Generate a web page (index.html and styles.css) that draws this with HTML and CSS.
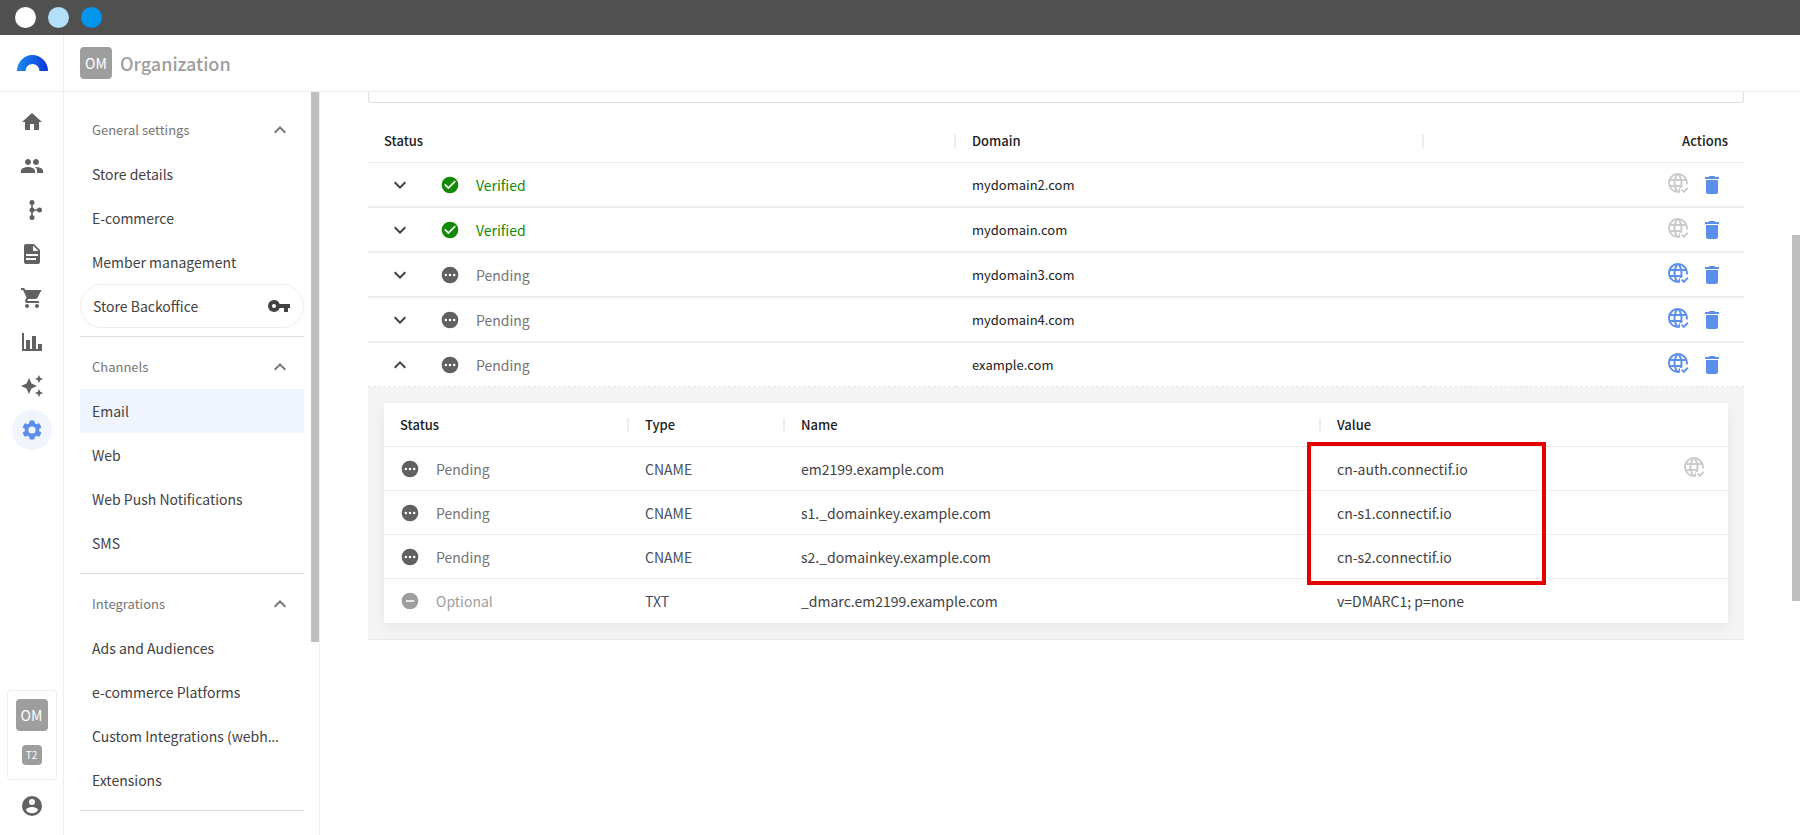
FILE: index.html
```html
<!DOCTYPE html>
<html lang="en">
  <head>
    <meta charset="UTF-8" />
    <meta name="viewport" content="width=device-width, initial-scale=1.0" />
    <title>Organization - Email domains</title>
    <link rel="stylesheet" href="styles.css">
  </head>
  <body>
    <!-- Shared icons -->
    <svg class="sprite" aria-hidden="true">
      <defs>
        <linearGradient id="logo-fill" x1="0" y1="0" x2="1" y2="0">
          <stop offset="0" stop-color="#1a8cf0" />
          <stop offset="1" stop-color="#0f35dc" />
        </linearGradient>
        <clipPath id="globe-cut"><path d="M0 0H24V13.5H16.5V17H14V24H0Z" /></clipPath>
      </defs>
      <symbol id="i-down" viewBox="0 0 24 24"><path d="M7.41 8.59 12 13.17l4.59-4.58L18 10l-6 6-6-6z" /></symbol>
      <symbol id="i-up" viewBox="0 0 24 24"><path d="M7.41 15.41 12 10.83l4.59 4.58L18 14l-6-6-6 6z" /></symbol>
      <symbol id="i-ok" viewBox="0 0 24 24"><path d="M12 2a10 10 0 1 0 0 20 10 10 0 0 0 0-20zm-2 15-5-5 1.41-1.41L10 14.17l7.59-7.59L19 8z" /></symbol>
      <symbol id="i-pending" viewBox="0 0 24 24"><path d="M12 2a10 10 0 1 0 0 20 10 10 0 0 0 0-20zM7 13.500a1.500 1.500 0 1 1 0-3 1.500 1.500 0 0 1 0 3zm5 0a1.500 1.500 0 1 1 0-3 1.500 1.500 0 0 1 0 3zm5 0a1.500 1.500 0 1 1 0-3 1.500 1.500 0 0 1 0 3z" /></symbol>
      <symbol id="i-optional" viewBox="0 0 24 24"><path d="M12 2a10 10 0 1 0 0 20 10 10 0 0 0 0-20zm5 11H7v-2h10z" /></symbol>
      <symbol id="i-trash" viewBox="0 0 24 24"><path d="M6 19c0 1.100.9 2 2 2h8c1.100 0 2-.9 2-2V7H6zM19 4h-3.500l-1-1h-5l-1 1H5v2h14z" /></symbol>
      <symbol id="i-globe" viewBox="0 0 24 24">
        <path clip-path="url(#globe-cut)" d="M16.360 14C16.440 13.340 16.500 12.680 16.500 12C16.500 11.320 16.440 10.660 16.360 10H19.740C19.900 10.640 20 11.310 20 12C20 12.690 19.900 13.360 19.740 14M14.590 19.560C15.190 18.450 15.650 17.250 15.970 16H18.920C17.960 17.650 16.430 18.930 14.590 19.560M14.340 14H9.660C9.560 13.340 9.500 12.680 9.500 12C9.500 11.320 9.560 10.650 9.660 10H14.340C14.430 10.650 14.500 11.320 14.500 12C14.500 12.680 14.430 13.340 14.340 14M12 19.960C11.170 18.760 10.500 17.430 10.090 16H13.910C13.500 17.430 12.830 18.760 12 19.960M8 8H5.080C6.030 6.340 7.570 5.060 9.400 4.440C8.800 5.550 8.350 6.750 8 8M5.080 16H8C8.350 17.250 8.800 18.450 9.400 19.560C7.570 18.930 6.030 17.650 5.080 16M4.260 14C4.100 13.360 4 12.690 4 12C4 11.310 4.100 10.640 4.260 10H7.640C7.560 10.660 7.500 11.320 7.500 12C7.500 12.680 7.560 13.340 7.640 14M12 4.030C12.830 5.230 13.500 6.570 13.910 8H10.090C10.500 6.570 11.170 5.230 12 4.030M18.920 8H15.970C15.650 6.750 15.190 5.550 14.590 4.440C16.430 5.070 17.960 6.340 18.920 8M12 2C6.470 2 2 6.500 2 12A10 10 0 0 0 12 22A10 10 0 0 0 22 12A10 10 0 0 0 12 2Z" />
        <path d="m17.750 22.160-2.750-3L16.160 18l1.590 1.590L21.340 16l1.160 1.410z" />
      </symbol>
    </svg>

    <div class="titlebar">
      <span class="dot dot-white"></span>
      <span class="dot dot-light"></span>
      <span class="dot dot-blue"></span>
    </div>

    <header class="header">
      <a class="logo" href="#" aria-label="Home">
        <svg width="31" height="16" viewBox="0 0 31 16"><path fill="url(#logo-fill)" d="M0 16A15.500 16 0 0 1 31 16H22.500A7 7 0 0 0 8.500 16Z" /></svg>
      </a>
      <span class="badge">OM</span>
      <h1>Organization</h1>
    </header>

    <div class="layout">
      <nav class="rail" aria-label="Main">
        <a href="#" aria-label="Dashboard"><svg viewBox="0 0 24 24"><path d="M10 20v-6h4v6h5v-8h3L12 3 2 12h3v8z" /></svg></a>
        <a href="#" aria-label="Contacts"><svg viewBox="0 0 24 24"><path d="M16 11c1.660 0 2.990-1.340 2.990-3S17.660 5 16 5s-3 1.340-3 3 1.340 3 3 3zm-8 0c1.660 0 2.990-1.340 2.990-3S9.660 5 8 5 5 6.340 5 8s1.340 3 3 3zm0 2c-2.330 0-7 1.170-7 3.500V19h14v-2.500C15 14.170 10.330 13 8 13zm8 0c-.29 0-.62.020-.97.050 1.160.840 1.970 1.970 1.970 3.450V19h6v-2.500c0-2.330-4.670-3.500-7-3.500z" /></svg></a>
        <a href="#" aria-label="Workflows"><svg viewBox="0 0 24 24"><path d="M12 4.500v15M12 12h7.500" fill="none" stroke="currentColor" stroke-width="1.600" /><circle cx="12" cy="4.500" r="2.500" /><circle cx="12" cy="12" r="2.500" /><circle cx="12" cy="19.500" r="2.500" /><circle cx="19.500" cy="12" r="2.500" /></svg></a>
        <a href="#" aria-label="Content"><svg viewBox="0 0 24 24"><path d="M14 2H6c-1.100 0-2 .9-2 2v16c0 1.100.9 2 2 2h12c1.100 0 2-.9 2-2V8zm2 16H6v-2h10zm2-4H6v-2h12zm-5-5V3.500L18.500 9z" /></svg></a>
        <a href="#" aria-label="Products"><svg viewBox="0 0 24 24"><path d="M7 18c-1.100 0-1.990.9-1.990 2S5.900 22 7 22s2-.9 2-2-.9-2-2-2zM17 18c-1.100 0-1.990.9-1.990 2s.89 2 1.990 2 2-.9 2-2-.9-2-2-2zM1 2v2h2l3.600 7.590-1.350 2.450C4.520 15.370 5.480 17 7 17h12v-2H7.420a.25.25 0 0 1-.22-.37l.9-1.630h7.450c.75 0 1.410-.41 1.750-1.030L21.500 4H5.210l-.94-2z" /></svg></a>
        <a href="#" aria-label="Reports"><svg viewBox="0 0 24 24"><path d="M22 21H2V3h2v16h2v-9h4v9h2V6h4v13h2v-5h4z" /></svg></a>
        <a href="#" aria-label="AI tools"><svg viewBox="0 0 24 24"><path d="m19 1-1.260 2.750L15 5l2.740 1.260L19 9l1.250-2.740L23 5l-2.750-1.250M9 4 6.500 9.500 1 12l5.500 2.500L9 20l2.500-5.500L17 12l-5.500-2.500M19 15l-1.260 2.740L15 19l2.740 1.250L19 23l1.250-2.750L23 19l-2.750-1.260" /></svg></a>
        <a href="#" class="active" aria-label="Settings"><svg viewBox="0 0 24 24"><path d="M19.140 12.940a7.100 7.100 0 0 0 0-1.880l2.030-1.580c.18-.14.23-.41.120-.61l-1.920-3.320a.49.49 0 0 0-.59-.22l-2.390.96a7 7 0 0 0-1.620-.94L14.410 2.810A.48.48 0 0 0 13.930 2.400h-3.840c-.24 0-.43.17-.47.41L9.260 5.350c-.59.24-1.130.57-1.620.94l-2.390-.96a.48.48 0 0 0-.59.22L2.740 8.870c-.12.210-.8.470.120.610l2.030 1.580a7 7 0 0 0 0 1.880l-2.030 1.580c-.18.140-.23.410-.12.610l1.920 3.320c.12.220.37.290.59.220l2.390-.96c.5.380 1.030.7 1.620.94l.36 2.540c.5.240.24.410.48.410h3.840c.24 0 .44-.17.470-.41l.36-2.540c.59-.24 1.130-.56 1.620-.94l2.390.96c.22.080.47 0 .59-.22l1.920-3.320a.48.48 0 0 0-.12-.61zM12 15.600a3.600 3.600 0 1 1 0-7.200 3.600 3.600 0 0 1 0 7.200z" /></svg></a>
        <div class="accounts">
          <span class="badge">OM</span>
          <span class="badge badge-small">T2</span>
        </div>
        <a href="#" aria-label="Profile"><svg viewBox="0 0 24 24"><path d="M12 2a10 10 0 1 0 0 20 10 10 0 0 0 0-20zm0 3a3 3 0 1 1 0 6 3 3 0 0 1 0-6zm0 14.200a7.200 7.200 0 0 1-6-3.220c.030-1.990 4-3.080 6-3.080s5.970 1.090 6 3.080a7.200 7.200 0 0 1-6 3.220z" /></svg></a>
      </nav>

      <div class="sidebar">
        <nav class="menu" aria-label="Settings">
          <section>
            <button class="group" type="button">General settings <svg class="icon"><use href="#i-up" /></svg></button>
            <a href="#">Store details</a>
            <a href="#">E-commerce</a>
            <a href="#">Member management</a>
            <a href="#" class="pill">Store Backoffice <svg class="icon" viewBox="0 0 24 24"><path d="M12.650 10A6 6 0 0 0 7 6a6 6 0 1 0 5.650 8H17v4h4v-4h2v-4zM7 14a2 2 0 1 1 0-4 2 2 0 0 1 0 4z" /></svg></a>
          </section>
          <section>
            <button class="group" type="button">Channels <svg class="icon"><use href="#i-up" /></svg></button>
            <a href="#" class="selected">Email</a>
            <a href="#">Web</a>
            <a href="#">Web Push Notifications</a>
            <a href="#">SMS</a>
          </section>
          <section>
            <button class="group" type="button">Integrations <svg class="icon"><use href="#i-up" /></svg></button>
            <a href="#">Ads and Audiences</a>
            <a href="#">e-commerce Platforms</a>
            <a href="#"><span>Custom Integrations (webh<span class="dots">…</span></span></a>
            <a href="#">Extensions</a>
          </section>
        </nav>
        <div class="scroll"><div class="thumb menu-thumb"></div></div>
      </div>

      <main class="main">
        <div class="content">
          <div class="panel-end"></div>
          <table class="domains">
            <colgroup><col class="d-status" /><col class="d-domain" /><col /></colgroup>
            <thead>
              <tr><th>Status</th><th>Domain</th><th class="right">Actions</th></tr>
            </thead>
            <tbody>
              <tr>
                <td><div class="status verified"><button type="button" aria-label="Expand"><svg class="icon"><use href="#i-down" /></svg></button><svg class="mark"><use href="#i-ok" /></svg>Verified</div></td>
                <td>mydomain2.com</td>
                <td><div class="actions"><button class="verify" type="button" aria-label="Verify" disabled><svg class="icon"><use href="#i-globe" /></svg></button><button type="button" aria-label="Delete"><svg class="icon"><use href="#i-trash" /></svg></button></div></td>
              </tr>
              <tr>
                <td><div class="status verified"><button type="button" aria-label="Expand"><svg class="icon"><use href="#i-down" /></svg></button><svg class="mark"><use href="#i-ok" /></svg>Verified</div></td>
                <td>mydomain.com</td>
                <td><div class="actions"><button class="verify" type="button" aria-label="Verify" disabled><svg class="icon"><use href="#i-globe" /></svg></button><button type="button" aria-label="Delete"><svg class="icon"><use href="#i-trash" /></svg></button></div></td>
              </tr>
              <tr>
                <td><div class="status"><button type="button" aria-label="Expand"><svg class="icon"><use href="#i-down" /></svg></button><svg class="mark"><use href="#i-pending" /></svg>Pending</div></td>
                <td>mydomain3.com</td>
                <td><div class="actions"><button class="verify" type="button" aria-label="Verify"><svg class="icon"><use href="#i-globe" /></svg></button><button type="button" aria-label="Delete"><svg class="icon"><use href="#i-trash" /></svg></button></div></td>
              </tr>
              <tr>
                <td><div class="status"><button type="button" aria-label="Expand"><svg class="icon"><use href="#i-down" /></svg></button><svg class="mark"><use href="#i-pending" /></svg>Pending</div></td>
                <td>mydomain4.com</td>
                <td><div class="actions"><button class="verify" type="button" aria-label="Verify"><svg class="icon"><use href="#i-globe" /></svg></button><button type="button" aria-label="Delete"><svg class="icon"><use href="#i-trash" /></svg></button></div></td>
              </tr>
              <tr class="open">
                <td><div class="status"><button type="button" aria-label="Collapse"><svg class="icon"><use href="#i-up" /></svg></button><svg class="mark"><use href="#i-pending" /></svg>Pending</div></td>
                <td>example.com</td>
                <td><div class="actions"><button class="verify" type="button" aria-label="Verify"><svg class="icon"><use href="#i-globe" /></svg></button><button type="button" aria-label="Delete"><svg class="icon"><use href="#i-trash" /></svg></button></div></td>
              </tr>
            </tbody>
          </table>

          <div class="details">
            <table class="records">
              <colgroup><col class="r-status" /><col class="r-type" /><col class="r-name" /><col /><col class="r-action" /></colgroup>
              <thead>
                <tr><th>Status</th><th>Type</th><th>Name</th><th colspan="2">Value</th></tr>
              </thead>
              <tbody>
                <tr>
                  <td><div class="status"><svg class="mark"><use href="#i-pending" /></svg>Pending</div></td>
                  <td class="type">CNAME</td>
                  <td>em2199.example.com</td>
                  <td class="value">cn-auth.connectif.io<span class="highlight"></span></td>
                  <td><div class="actions"><button class="verify" type="button" aria-label="Verify" disabled><svg class="icon"><use href="#i-globe" /></svg></button></div></td>
                </tr>
                <tr>
                  <td><div class="status"><svg class="mark"><use href="#i-pending" /></svg>Pending</div></td>
                  <td class="type">CNAME</td>
                  <td>s1._domainkey.example.com</td>
                  <td>cn-s1.connectif.io</td>
                  <td></td>
                </tr>
                <tr>
                  <td><div class="status"><svg class="mark"><use href="#i-pending" /></svg>Pending</div></td>
                  <td class="type">CNAME</td>
                  <td>s2._domainkey.example.com</td>
                  <td>cn-s2.connectif.io</td>
                  <td></td>
                </tr>
                <tr>
                  <td><div class="status optional"><svg class="mark"><use href="#i-optional" /></svg>Optional</div></td>
                  <td class="type">TXT</td>
                  <td>_dmarc.em2199.example.com</td>
                  <td>v=DMARC1; p=none</td>
                  <td></td>
                </tr>
              </tbody>
            </table>
          </div>
        </div>
        <div class="scroll"><div class="thumb main-thumb"></div></div>
      </main>
    </div>
  </body>
</html>
```
FILE: styles.css
```css
* {
  box-sizing: border-box;
}
body {
  margin: 0;
  height: 100vh;
  display: flex;
  flex-direction: column;
  overflow: hidden;
  font-family: "Source Sans Pro", "Noto Sans CJK SC", sans-serif;
  font-size: 14px;
  line-height: 20px;
  color: #424242;
  background: #fff;
}
a {
  color: inherit;
  text-decoration: none;
}
button {
  padding: 0;
  border: 0;
  background: none;
  font: inherit;
  color: inherit;
}
svg {
  display: block;
  flex: none;
  fill: currentColor;
}
.sprite {
  position: absolute;
  width: 0;
  height: 0;
}
.icon {
  width: 24px;
  height: 24px;
}

/* Window bar */
.titlebar {
  flex: none;
  display: flex;
  align-items: center;
  gap: 12px;
  height: 35px;
  padding-left: 15px;
  background: #505050;
}
.dot {
  width: 21px;
  height: 21px;
  border-radius: 50%;
}
.dot-white {
  background: #fff;
}
.dot-light {
  background: #b3dff8;
}
.dot-blue {
  background: #0295eb;
}

/* Header */
.header {
  flex: none;
  display: flex;
  align-items: center;
  height: 57px;
  border-bottom: 1px solid #eee;
}
.logo {
  display: flex;
  align-items: center;
  justify-content: center;
  width: 64px;
  height: 100%;
  margin-right: 16px;
  padding-left: 2px;
  border-right: 1px solid #eee;
}
.badge {
  display: flex;
  align-items: center;
  justify-content: center;
  width: 32px;
  height: 32px;
  border-radius: 4px;
  background: #9e9e9e;
  color: #fff;
}
.badge-small {
  width: 20px;
  height: 20px;
  font-size: 10px;
}
h1 {
  margin: 0 0 0 8px;
  font-size: 18px;
  line-height: 24px;
  font-weight: 500;
  color: #9e9e9e;
}

.layout {
  flex: 1;
  min-height: 0;
  display: flex;
}

/* Icon rail */
.rail {
  flex: none;
  width: 64px;
  display: flex;
  flex-direction: column;
  align-items: center;
  gap: 4px;
  padding: 10px 0 9px;
  border-right: 1px solid #eee;
  color: #616161;
}
.rail a {
  display: flex;
  align-items: center;
  justify-content: center;
  width: 40px;
  height: 40px;
  border-radius: 50%;
}
.rail a svg {
  width: 24px;
  height: 24px;
}
.rail .active {
  background: #f0f5fd;
  color: #5c8fec;
}
.accounts {
  display: flex;
  flex-direction: column;
  align-items: center;
  gap: 14px;
  width: 50px;
  margin: auto 0 2px;
  padding: 8px 0 14px;
  border: 1px solid #eee;
  border-radius: 4px;
}

/* Settings menu */
.sidebar {
  flex: none;
  display: flex;
  width: 256px;
  border-right: 1px solid #eee;
}
.menu {
  flex: 1;
  min-width: 0;
  padding: 16px 7px 0 16px;
}
.menu section {
  padding-bottom: 8px;
  margin-bottom: 8px;
  border-bottom: 1px solid #ddd;
}
.menu a,
.group {
  display: flex;
  align-items: center;
  justify-content: space-between;
  width: 100%;
  height: 44px;
  padding: 0 12px;
  white-space: nowrap;
}
.menu .group {
  font-size: 13px;
  color: #757575;
}
.menu .selected {
  background: #f0f5fd;
}
.menu .pill {
  border: 1px solid #eee;
  border-radius: 22px;
}
/* the CJK font centres its ellipsis, so take it from Noto Sans */
.dots {
  font-family: "Noto Sans", sans-serif;
}
.scroll {
  flex: none;
  width: 8px;
}
.thumb {
  background: #bfbfbf;
}
.menu-thumb {
  height: 74%;
}
.main-thumb {
  height: 61%;
}

/* Domains */
.main {
  flex: 1;
  min-width: 0;
  display: flex;
}
.main > .scroll {
  padding-top: 143px;
}
.content {
  flex: 1;
  min-width: 0;
  padding: 0 48px;
}
.panel-end {
  height: 11px;
  margin-bottom: 16px;
  border: 1px solid #ddd;
  border-top: 0;
  border-radius: 0 0 4px 4px;
}
table {
  width: 100%;
  border-collapse: separate;
  border-spacing: 0;
  table-layout: fixed;
}
th,
td {
  height: 44px;
  padding: 0 16px;
  text-align: left;
  border-bottom: 1px solid #eee;
}
th {
  position: relative;
  font-size: 13px;
  font-weight: 500;
  color: #212121;
}
th:not(:last-child)::after {
  content: "";
  position: absolute;
  right: 0;
  top: 15px;
  width: 2px;
  height: 14px;
  background: #eee;
}
.right {
  text-align: right;
}
.d-status {
  width: 588px;
}
.d-domain {
  width: 34%;
}
.domains td {
  height: 45px;
  font-size: 13px;
  color: #212121;
  border-bottom-width: 2px;
}
.domains .open td {
  height: 44px;
  border-bottom: 1px dashed #e6e6e6;
}
.status {
  display: flex;
  align-items: center;
  gap: 16px;
  font-size: 14px;
  color: #757575;
}
.status button {
  margin: 0 12px 0 4px;
  color: #424242;
}
.mark {
  width: 20px;
  height: 20px;
  color: #616161;
}
.verified,
.verified .mark {
  color: #128a06;
}
.optional,
.optional .mark {
  color: #9e9e9e;
}
.actions {
  display: flex;
  align-items: center;
  justify-content: flex-end;
  gap: 10px;
  padding-right: 4px;
  color: #5c8fec;
}
.actions button:disabled {
  color: #ccc;
}
.verify {
  padding-bottom: 4px;
}

/* DNS records */
.details {
  padding: 16px;
  background: #f4f4f4;
  border-bottom: 1px solid #eaeaea;
}
.records {
  background: #fff;
  box-shadow: 0 4px 12px rgba(0, 0, 0, 0.06);
}
.records tr:last-child td {
  border-bottom: 0;
}
.r-status {
  width: 245px;
}
.r-type {
  width: 156px;
}
.r-name {
  width: 536px;
}
.r-action {
  width: 80px;
}
.records .type {
  color: #455060;
}
.records .actions {
  padding-right: 6px;
}
.value {
  position: relative;
}
/* Marks the three values to copy */
.highlight {
  position: absolute;
  top: -5px;
  left: -14px;
  width: 239px;
  height: 143px;
  border: 4px solid #e30000;
}
```
